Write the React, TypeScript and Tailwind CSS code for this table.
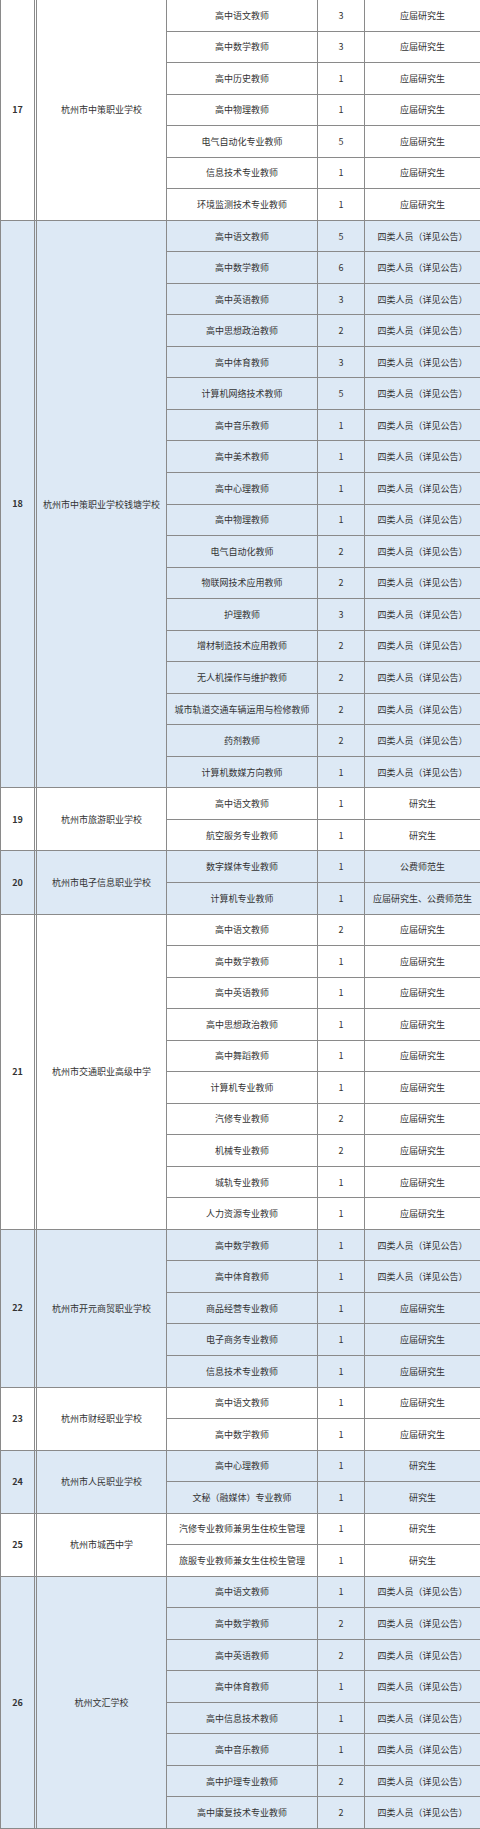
import React from "react";

type Post = { name: string; count: number; req: string };
type School = { no: number; name: string; posts: Post[] };

const SILEI = "四类人员（详见公告）";
const YJ = "应届研究生";
const YJS = "研究生";

const schools: School[] = [
    {
        no: 17,
        name: "杭州市中策职业学校",
        posts: [
            { name: "高中语文教师", count: 3, req: YJ },
            { name: "高中数学教师", count: 3, req: YJ },
            { name: "高中历史教师", count: 1, req: YJ },
            { name: "高中物理教师", count: 1, req: YJ },
            { name: "电气自动化专业教师", count: 5, req: YJ },
            { name: "信息技术专业教师", count: 1, req: YJ },
            { name: "环境监测技术专业教师", count: 1, req: YJ },
        ],
    },
    {
        no: 18,
        name: "杭州市中策职业学校钱塘学校",
        posts: [
            { name: "高中语文教师", count: 5, req: SILEI },
            { name: "高中数学教师", count: 6, req: SILEI },
            { name: "高中英语教师", count: 3, req: SILEI },
            { name: "高中思想政治教师", count: 2, req: SILEI },
            { name: "高中体育教师", count: 3, req: SILEI },
            { name: "计算机网络技术教师", count: 5, req: SILEI },
            { name: "高中音乐教师", count: 1, req: SILEI },
            { name: "高中美术教师", count: 1, req: SILEI },
            { name: "高中心理教师", count: 1, req: SILEI },
            { name: "高中物理教师", count: 1, req: SILEI },
            { name: "电气自动化教师", count: 2, req: SILEI },
            { name: "物联网技术应用教师", count: 2, req: SILEI },
            { name: "护理教师", count: 3, req: SILEI },
            { name: "增材制造技术应用教师", count: 2, req: SILEI },
            { name: "无人机操作与维护教师", count: 2, req: SILEI },
            { name: "城市轨道交通车辆运用与检修教师", count: 2, req: SILEI },
            { name: "药剂教师", count: 2, req: SILEI },
            { name: "计算机数媒方向教师", count: 1, req: SILEI },
        ],
    },
    {
        no: 19,
        name: "杭州市旅游职业学校",
        posts: [
            { name: "高中语文教师", count: 1, req: YJS },
            { name: "航空服务专业教师", count: 1, req: YJS },
        ],
    },
    {
        no: 20,
        name: "杭州市电子信息职业学校",
        posts: [
            { name: "数字媒体专业教师", count: 1, req: "公费师范生" },
            { name: "计算机专业教师", count: 1, req: "应届研究生、公费师范生" },
        ],
    },
    {
        no: 21,
        name: "杭州市交通职业高级中学",
        posts: [
            { name: "高中语文教师", count: 2, req: YJ },
            { name: "高中数学教师", count: 1, req: YJ },
            { name: "高中英语教师", count: 1, req: YJ },
            { name: "高中思想政治教师", count: 1, req: YJ },
            { name: "高中舞蹈教师", count: 1, req: YJ },
            { name: "计算机专业教师", count: 1, req: YJ },
            { name: "汽修专业教师", count: 2, req: YJ },
            { name: "机械专业教师", count: 2, req: YJ },
            { name: "城轨专业教师", count: 1, req: YJ },
            { name: "人力资源专业教师", count: 1, req: YJ },
        ],
    },
    {
        no: 22,
        name: "杭州市开元商贸职业学校",
        posts: [
            { name: "高中数学教师", count: 1, req: SILEI },
            { name: "高中体育教师", count: 1, req: SILEI },
            { name: "商品经营专业教师", count: 1, req: YJ },
            { name: "电子商务专业教师", count: 1, req: YJ },
            { name: "信息技术专业教师", count: 1, req: YJ },
        ],
    },
    {
        no: 23,
        name: "杭州市财经职业学校",
        posts: [
            { name: "高中语文教师", count: 1, req: YJ },
            { name: "高中数学教师", count: 1, req: YJ },
        ],
    },
    {
        no: 24,
        name: "杭州市人民职业学校",
        posts: [
            { name: "高中心理教师", count: 1, req: YJS },
            { name: "文秘（融媒体）专业教师", count: 1, req: YJS },
        ],
    },
    {
        no: 25,
        name: "杭州市城西中学",
        posts: [
            { name: "汽修专业教师兼男生住校生管理", count: 1, req: YJS },
            { name: "旅服专业教师兼女生住校生管理", count: 1, req: YJS },
        ],
    },
    {
        no: 26,
        name: "杭州文汇学校",
        posts: [
            { name: "高中语文教师", count: 1, req: SILEI },
            { name: "高中数学教师", count: 2, req: SILEI },
            { name: "高中英语教师", count: 2, req: SILEI },
            { name: "高中体育教师", count: 1, req: SILEI },
            { name: "高中信息技术教师", count: 1, req: SILEI },
            { name: "高中音乐教师", count: 1, req: SILEI },
            { name: "高中护理专业教师", count: 2, req: SILEI },
            { name: "高中康复技术专业教师", count: 2, req: SILEI },
        ],
    },
];

const spanClass: Record<number, string> = {
    2: "row-span-2",
    5: "row-span-5",
    7: "row-span-7",
    8: "row-span-8",
    10: "row-span-10",
    18: "row-span-18",
};

const cell = "flex items-center justify-center text-center border-b border-r border-[#8a8a8a] leading-none";

// full-width parens sit centred in their box in the source font, TC glyphs do the same
const Txt = ({ s }: { s: string }) => (
    <span>
        {s.split(/([（）])/).map((part, i) =>
            part === "（" || part === "）" ? (
                <span key={i} style={{ fontFamily: '"Noto Sans CJK TC", sans-serif' }}>
                    {part}
                </span>
            ) : (
                part
            )
        )}
    </span>
);

export default function App() {
    return (
        <div
            className="w-[480px] h-[1829px] bg-white text-[9px] text-[#333333]"
            style={{ fontFamily: '"Noto Sans CJK SC", "Noto Sans", sans-serif' }}
        >
            <div className="grid h-full grid-cols-[36px_130px_151px_47px_116px] grid-rows-[repeat(58,minmax(0,1fr))] border-l border-[#8a8a8a]">
                {schools.map((s, gi) => {
                    const bg = gi % 2 === 1 ? "bg-[#dde9f5]" : "bg-white";
                    const span = spanClass[s.posts.length];
                    return (
                        <React.Fragment key={s.no}>
                            {/* group number, double rule on its right */}
                            <div className={`${span} ${bg} flex items-center justify-center border-b border-r-[3px] border-double border-[#8a8a8a] font-bold`}>
                                {s.no}
                            </div>
                            <div className={`${span} ${bg} ${cell}`}>{s.name}</div>
                            {s.posts.map((p, i) => (
                                <React.Fragment key={i}>
                                    <div className={`${bg} ${cell}`}>
                                        <Txt s={p.name} />
                                    </div>
                                    <div className={`${bg} ${cell}`}>{p.count}</div>
                                    <div className={`${bg} ${cell}`}>
                                        <Txt s={p.req} />
                                    </div>
                                </React.Fragment>
                            ))}
                        </React.Fragment>
                    );
                })}
            </div>
        </div>
    );
}
